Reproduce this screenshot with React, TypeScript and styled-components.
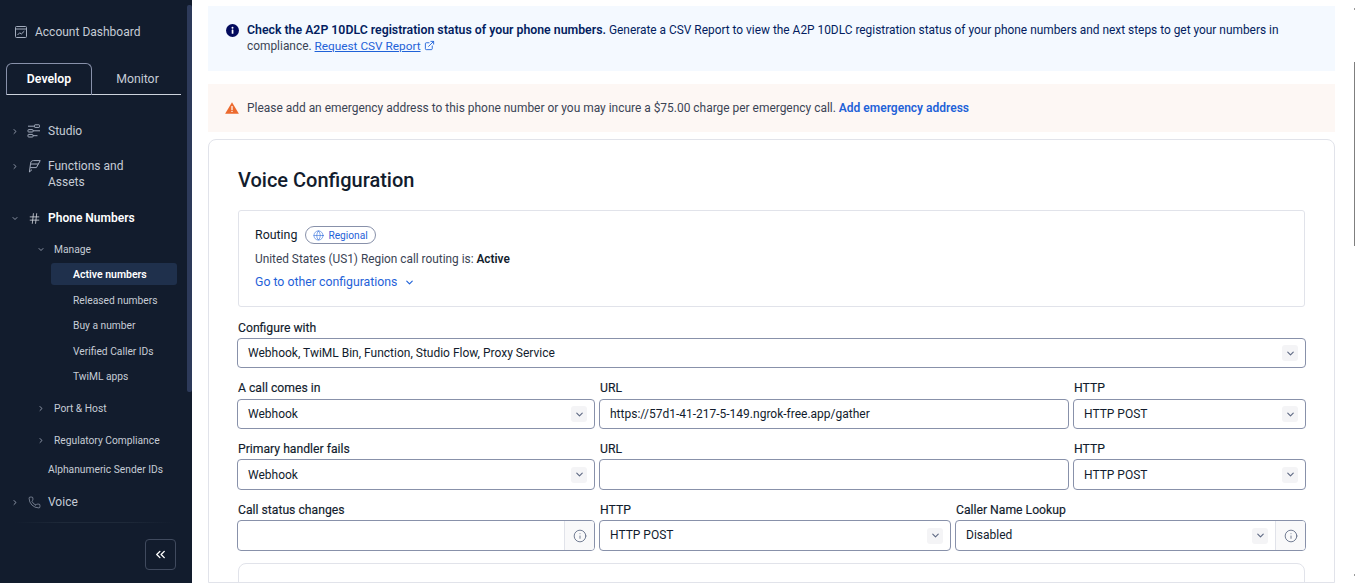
import React from "react";
import styled, { createGlobalStyle } from "styled-components";
import { ChevronRight, ChevronDown, ChevronsLeft, Hash, Phone, Info, ExternalLink, Globe } from "lucide-react";

const FONT = `"Roboto", "Noto Sans", "Liberation Sans", sans-serif`;

const Global = createGlobalStyle`
  html, body { margin: 0; padding: 0; height: 100%; overflow: hidden; background: #fff; }
  body { font-family: ${FONT}; color: #121c2d; font-size: 12px; }
  * { box-sizing: border-box; }
`;

const Page = styled.div`
  width: 1355px;
  height: 583px;
  display: flex;
  overflow: hidden;
  position: relative;
`;

const Sidebar = styled.aside`
  width: 192px;
  height: 583px;
  flex: none;
  background: #121c2d;
  color: #ccd2dc;
  position: relative;
  padding-top: 24px;
`;

const SideScrollThumb = styled.div`
  position: absolute;
  top: 5px;
  right: 0;
  width: 5px;
  height: 387px;
  background: #2d3a5a;
  border-radius: 2px;
`;

const DashLink = styled.div`
  display: flex;
  align-items: center;
  height: 15px;
  padding-left: 14px;
  font-size: 12px;
  color: #c6ccd6;
`;

const Tabs = styled.div`
  display: flex;
  margin: 24px 11px 0 6px;
  height: 32px;
  border-bottom: 1px solid #ccd2dc;
`;

const Tab = styled.div<{ $active?: boolean }>`
  width: ${(p) => (p.$active ? "86px" : "89px")};
  height: ${(p) => (p.$active ? "32px" : "31px")};
  display: flex;
  align-items: center;
  justify-content: center;
  padding: ${(p) => (p.$active ? "0 0 2px 0" : "0 0 0 2px")};
  font-size: 12.3px;
  font-weight: ${(p) => (p.$active ? 600 : 400)};
  color: ${(p) => (p.$active ? "#fff" : "#c6ccd6")};
  border: ${(p) => (p.$active ? "1px solid #8891aa" : "none")};
  border-bottom: none;
  border-radius: 6px 6px 0 0;
`;

const Nav = styled.nav`
  display: flex;
  flex-direction: column;
  padding-top: 28px;
`;

const NavRow = styled.div<{ $h: number; $mt?: number; $bold?: boolean; $align?: string }>`
  display: flex;
  align-items: ${(p) => p.$align || "center"};
  height: ${(p) => p.$h}px;
  margin-top: ${(p) => p.$mt || 0}px;
  padding-left: 11px;
  font-size: 12px;
  line-height: 16px;
  font-weight: ${(p) => (p.$bold ? 600 : 400)};
  color: ${(p) => (p.$bold ? "#fff" : "#c6ccd6")};
`;

const Caret = styled.span<{ $mt?: number }>`
  width: 8px;
  display: flex;
  justify-content: center;
  color: #a3acbd;
  flex: none;
  margin-right: 8px;
  margin-top: ${(p) => p.$mt || 0}px;
`;

const IconSlot = styled.span<{ $bright?: boolean }>`
  width: 14px;
  height: 16px;
  display: flex;
  align-items: center;
  justify-content: center;
  margin-right: 7px;
  flex: none;
  color: ${(p) => (p.$bright ? "#e1e3ea" : "#a3acbd")};
`;

const SubRow = styled.div<{ $mt?: number }>`
  display: flex;
  align-items: center;
  height: 16px;
  margin-top: ${(p) => p.$mt || 0}px;
  padding-left: 37px;
  font-size: 10.25px;
  color: #c6ccd6;
`;

const SubCaret = styled.span`
  width: 8px;
  display: flex;
  justify-content: center;
  color: #a3acbd;
  margin-right: 9px;
`;

const Leaf = styled.div<{ $active?: boolean; $mt?: number }>`
  margin: ${(p) => p.$mt || 0}px 15px 0 51px;
  height: 22px;
  padding-left: 22px;
  display: flex;
  align-items: center;
  font-size: ${(p) => (p.$active ? "10.5px" : "10.25px")};
  border-radius: 3px;
  font-weight: ${(p) => (p.$active ? 600 : 400)};
  color: ${(p) => (p.$active ? "#fff" : "#c6ccd6")};
  background: ${(p) => (p.$active ? "#1f304c" : "transparent")};
`;

const PlainRow = styled.div`
  height: 16px;
  margin-top: 13px;
  padding-left: 48px;
  font-size: 10.25px;
  display: flex;
  align-items: center;
  color: #c6ccd6;
`;

const SideDivider = styled.div`
  position: absolute;
  left: 14px;
  width: 160px;
  top: 522px;
  height: 1px;
  background: linear-gradient(90deg, #121c2d, #1e2939 30%, #1e2939 70%, #121c2d);
`;

const CollapseBtn = styled.button`
  position: absolute;
  left: 145px;
  top: 539px;
  width: 31px;
  height: 31px;
  background: transparent;
  border: 1px solid #404a5e;
  border-radius: 4px;
  color: #fff;
  display: flex;
  align-items: center;
  justify-content: center;
  padding: 0;
`;

const Main = styled.main`
  flex: 1;
  min-width: 0;
  padding: 6px 20px 0 16px;
  display: flex;
  flex-direction: column;
`;

const Banner = styled.div<{ $kind: "info" | "warn" }>`
  display: flex;
  align-items: ${(p) => (p.$kind === "info" ? "flex-start" : "center")};
  gap: 8px;
  padding: ${(p) => (p.$kind === "info" ? "16px 48px 0 18px" : "0 18px 0 17px")};
  height: ${(p) => (p.$kind === "info" ? "65px" : "48px")};
  margin-top: ${(p) => (p.$kind === "info" ? "0" : "13px")};
  background: ${(p) => (p.$kind === "info" ? "#f4f9ff" : "#fdf7f4")};
  font-size: ${(p) => (p.$kind === "info" ? "11.9px" : "11.95px")};
  line-height: 16px;
  color: ${(p) => (p.$kind === "info" ? "#031d60" : "#3b4454")};
`;

const BannerText = styled.div`
  flex: 1;
`;

const Strong = styled.strong`
  font-weight: 600;
  font-size: 12.3px;
`;

const ActiveWord = styled.strong`
  font-weight: 600;
  color: #121c2d;
`;

const Grey = styled.span`
  color: #3b4454;
`;

const Link = styled.a`
  color: #1f62d8;
  text-decoration: underline;
  font-size: 11.8px;
`;

const LinkIcon = styled.span`
  display: inline-flex;
  vertical-align: -1px;
  margin-left: 3px;
  color: #1f62d8;
`;

const BoldLink = styled.a`
  color: #1f62d8;
  font-weight: 600;
  font-size: 12px;
`;

const Card = styled.section`
  margin-top: 7px;
  border: 1px solid #e1e3ea;
  border-radius: 8px 8px 0 0;
  padding: 28px 29px 0;
  flex: 1;
  min-height: 0;
  overflow: hidden;
`;

const Title = styled.h2`
  margin: 0;
  font-size: 20px;
  font-weight: 500;
  line-height: 24px;
  color: #121c2d;
`;

const RoutingBox = styled.div`
  margin-top: 18px;
  height: 97px;
  border: 1px solid #e1e3ea;
  border-radius: 3px;
  padding: 16px;
`;

const RoutingLine = styled.div`
  display: flex;
  align-items: center;
  gap: 8px;
  height: 16px;
  font-size: 12.4px;
  color: #121c2d;
`;

const RoutingLabel = styled.span`
  padding-bottom: 2px;
`;

const Pill = styled.span`
  display: inline-flex;
  align-items: center;
  gap: 4px;
  height: 18px;
  padding: 0 7px;
  border: 1px solid #8891aa;
  border-radius: 9px;
  font-size: 10.2px;
  color: #1f62d8;
`;

const StatusLine = styled.div`
  margin-top: 8px;
  height: 16px;
  line-height: 16px;
  font-size: 11.85px;
  color: #3b4454;
`;

const GoLine = styled.div`
  margin-top: 7px;
  height: 16px;
  display: flex;
  align-items: center;
  gap: 7px;
  font-size: 12.3px;
  color: #1f62d8;
`;

const FieldGrid = styled.div<{ $cols: string; $mt: number }>`
  display: grid;
  grid-template-columns: ${(p) => p.$cols};
  gap: 4px;
  margin: ${(p) => p.$mt}px -1px 0 -1px;
`;

const Field = styled.div`
  min-width: 0;
`;

const Label = styled.label<{ $mb?: number }>`
  display: block;
  height: 16px;
  line-height: 16px;
  font-size: 12.2px;
  font-weight: 400;
  color: #121c2d;
  margin-bottom: ${(p) => p.$mb ?? 2}px;
  padding-left: 1px;
  -webkit-text-stroke: 0.15px #121c2d;
`;

const Control = styled.div<{ $h?: number }>`
  height: ${(p) => p.$h || 30}px;
  border: 1px solid #8891aa;
  border-radius: 4px;
  display: flex;
  align-items: center;
  background: #fff;
  font-size: 12px;
  color: #121c2d;
  overflow: hidden;
`;

const Value = styled.span<{ $lift?: boolean }>`
  flex: 1;
  padding-left: 10px;
  padding-bottom: ${(p) => (p.$lift ? "2px" : "0")};
  white-space: nowrap;
`;

const ChevBox = styled.span`
  width: 16px;
  height: 16px;
  margin-right: 7px;
  border-radius: 3px;
  background: #f4f4f6;
  color: #606b85;
  display: flex;
  align-items: center;
  justify-content: center;
  flex: none;
`;

const Addon = styled.span`
  width: 30px;
  height: 100%;
  flex: none;
  background: #f9f9fa;
  border-left: 1px solid #e1e3ea;
  color: #606b85;
  display: flex;
  align-items: center;
  justify-content: center;
`;

const NextBox = styled.div`
  margin-top: 12px;
  height: 60px;
  border: 1px solid #e1e3ea;
  border-radius: 8px 8px 0 0;
`;

const PageScroll = styled.div`
  position: absolute;
  right: 0;
  top: 62px;
  width: 1px;
  height: 184px;
  background: #7f7f7f;
`;

const ScrollMark = styled.div<{ $top: number }>`
  position: absolute;
  right: 0;
  top: ${(p) => p.$top}px;
  width: 1px;
  height: 2px;
  background: #9a9a9a;
`;

const Select = ({ v, h, lift }: { v: string; h?: number; lift?: boolean }) => (
  <Control $h={h}>
    <Value $lift={lift}>{v}</Value>
    <ChevBox><ChevronDown size={11} strokeWidth={2.5} /></ChevBox>
  </Control>
);

const StudioIcon = () => (
  <svg width="14" height="14" viewBox="0 0 14 14" fill="none" stroke="currentColor" strokeWidth="1">
    <rect x="7.5" y="0.8" width="5" height="2.6" rx=".6" />
    <rect x="1" y="5.6" width="5" height="2.4" rx=".6" />
    <rect x="1" y="10.4" width="5" height="2.6" rx=".6" />
    <path d="M1 2.2h6.5M6 6.8h7M6 11.7h4.5" />
  </svg>
);

const FunctionsIcon = () => (
  <svg width="14" height="14" viewBox="0 0 14 14" fill="none" stroke="currentColor" strokeWidth="1">
    <path d="M2.4 13 3.6 4.2C3.9 2.4 4.8 1.6 6.4 1.6h6.8L11.4 5H3.6M3.2 8.6h6.2L11.4 5M2.4 13 5 10.6" />
  </svg>
);

const ChartIcon = () => (
  <svg width="14" height="14" viewBox="0 0 14 14" fill="none" stroke="currentColor" strokeWidth="1">
    <rect x="1.5" y="1.5" width="11" height="11" rx="1" />
    <path d="M1.5 4h11M3.5 10l2.2-2.2 1.6 1.2 3-2.8" />
  </svg>
);

const InfoFilled = () => (
  <svg width="13" height="13" viewBox="0 0 13 13" style={{ flex: "none", marginTop: 2 }}>
    <circle cx="6.5" cy="6.5" r="6.5" fill="#030b5d" />
    <rect x="5.7" y="5.6" width="1.7" height="4.2" rx=".4" fill="#fff" />
    <circle cx="6.5" cy="3.8" r="1" fill="#fff" />
  </svg>
);

const Warn = () => (
  <svg width="14" height="12" viewBox="0 0 14 12" style={{ flex: "none" }}>
    <path d="M7 .3 13.9 11.7H.1z" fill="#ec6a2e" />
    <rect x="6.4" y="4" width="1.2" height="4" fill="#fff" />
    <rect x="6.4" y="8.8" width="1.2" height="1.2" fill="#fff" />
  </svg>
);

export default function App() {
  return (
    <Page>
      <Global />
      <Sidebar>
        <SideScrollThumb />
        <DashLink><IconSlot><ChartIcon /></IconSlot>Account Dashboard</DashLink>
        <Tabs>
          <Tab $active>Develop</Tab>
          <Tab>Monitor</Tab>
        </Tabs>
        <Nav>
          <NavRow $h={16}>
            <Caret><ChevronRight size={9} strokeWidth={2.5} /></Caret>
            <IconSlot><StudioIcon /></IconSlot>Studio
          </NavRow>
          <NavRow $h={32} $mt={19} $align="flex-start">
            <Caret $mt={4}><ChevronRight size={9} strokeWidth={2.5} /></Caret>
            <IconSlot><FunctionsIcon /></IconSlot>
            <span>Functions and<br />Assets</span>
          </NavRow>
          <NavRow $h={16} $mt={20} $bold>
            <Caret><ChevronDown size={9} strokeWidth={2.5} /></Caret>
            <IconSlot $bright><Hash size={13} strokeWidth={1.4} /></IconSlot>Phone Numbers
          </NavRow>
          <SubRow $mt={15}>
            <SubCaret><ChevronDown size={9} strokeWidth={2.5} /></SubCaret>Manage
          </SubRow>
          <Leaf $active $mt={6}>Active numbers</Leaf>
          <Leaf $mt={4}>Released numbers</Leaf>
          <Leaf $mt={3}>Buy a number</Leaf>
          <Leaf $mt={4}>Verified Caller IDs</Leaf>
          <Leaf $mt={3}>TwiML apps</Leaf>
          <SubRow $mt={13}>
            <SubCaret><ChevronRight size={9} strokeWidth={2.5} /></SubCaret>Port &amp; Host
          </SubRow>
          <SubRow $mt={16}>
            <SubCaret><ChevronRight size={9} strokeWidth={2.5} /></SubCaret>Regulatory Compliance
          </SubRow>
          <PlainRow>Alphanumeric Sender IDs</PlainRow>
          <NavRow $h={16} $mt={17}>
            <Caret><ChevronRight size={9} strokeWidth={2.5} /></Caret>
            <IconSlot><Phone size={13} strokeWidth={1.2} /></IconSlot>Voice
          </NavRow>
        </Nav>
        <SideDivider />
        <CollapseBtn aria-label="Collapse"><ChevronsLeft size={15} strokeWidth={2.2} /></CollapseBtn>
      </Sidebar>
      <Main>
        <Banner $kind="info">
          <InfoFilled />
          <BannerText>
            <Strong>Check the A2P 10DLC registration status of your phone numbers.</Strong>{" "}
            Generate a CSV Report to view the A2P 10DLC registration status of your phone numbers and next steps to get your numbers in{" "}
            <Grey>compliance.</Grey>{" "}
            <Link href="#">Request CSV Report</Link>
            <LinkIcon><ExternalLink size={11} strokeWidth={2} /></LinkIcon>
          </BannerText>
        </Banner>
        <Banner $kind="warn">
          <Warn />
          <BannerText>
            Please add an emergency address to this phone number or you may incure a $75.00 charge per emergency call.{" "}
            <BoldLink>Add emergency address</BoldLink>
          </BannerText>
        </Banner>
        <Card>
          <Title>Voice Configuration</Title>
          <RoutingBox>
            <RoutingLine>
              <RoutingLabel>Routing</RoutingLabel>
              <Pill><Globe size={11} strokeWidth={1.2} />Regional</Pill>
            </RoutingLine>
            <StatusLine>United States (US1) Region call routing is: <ActiveWord>Active</ActiveWord></StatusLine>
            <GoLine>Go to other configurations <ChevronDown size={11} strokeWidth={2.5} /></GoLine>
          </RoutingBox>
          <FieldGrid $cols="1fr" $mt={13}>
            <Field>
              <Label>Configure with</Label>
              <Select v="Webhook, TwiML Bin, Function, Studio Flow, Proxy Service" />
            </Field>
          </FieldGrid>
          <FieldGrid $cols="358px 470px 233px" $mt={12}>
            <Field>
              <Label $mb={3}>A call comes in</Label>
              <Select v="Webhook" />
            </Field>
            <Field>
              <Label $mb={3}>URL</Label>
              <Control><Value>https://57d1-41-217-5-149.ngrok-free.app/gather</Value></Control>
            </Field>
            <Field>
              <Label $mb={3}>HTTP</Label>
              <Select v="HTTP POST" />
            </Field>
          </FieldGrid>
          <FieldGrid $cols="358px 470px 233px" $mt={12}>
            <Field>
              <Label>Primary handler fails</Label>
              <Select v="Webhook" h={31} />
            </Field>
            <Field>
              <Label>URL</Label>
              <Control $h={31} />
            </Field>
            <Field>
              <Label>HTTP</Label>
              <Select v="HTTP POST" h={31} />
            </Field>
          </FieldGrid>
          <FieldGrid $cols="358px 352px 351px" $mt={12}>
            <Field>
              <Label>Call status changes</Label>
              <Control $h={31}>
                <Value />
                <Addon><Info size={14} strokeWidth={1.5} /></Addon>
              </Control>
            </Field>
            <Field>
              <Label>HTTP</Label>
              <Select v="HTTP POST" h={31} lift />
            </Field>
            <Field>
              <Label>Caller Name Lookup</Label>
              <Control $h={31}>
                <Value $lift>Disabled</Value>
                <ChevBox><ChevronDown size={11} strokeWidth={2.5} /></ChevBox>
                <Addon><Info size={14} strokeWidth={1.5} /></Addon>
              </Control>
            </Field>
          </FieldGrid>
          <NextBox />
        </Card>
      </Main>
      <ScrollMark $top={8} />
      <PageScroll />
      <ScrollMark $top={574} />
    </Page>
  );
}
